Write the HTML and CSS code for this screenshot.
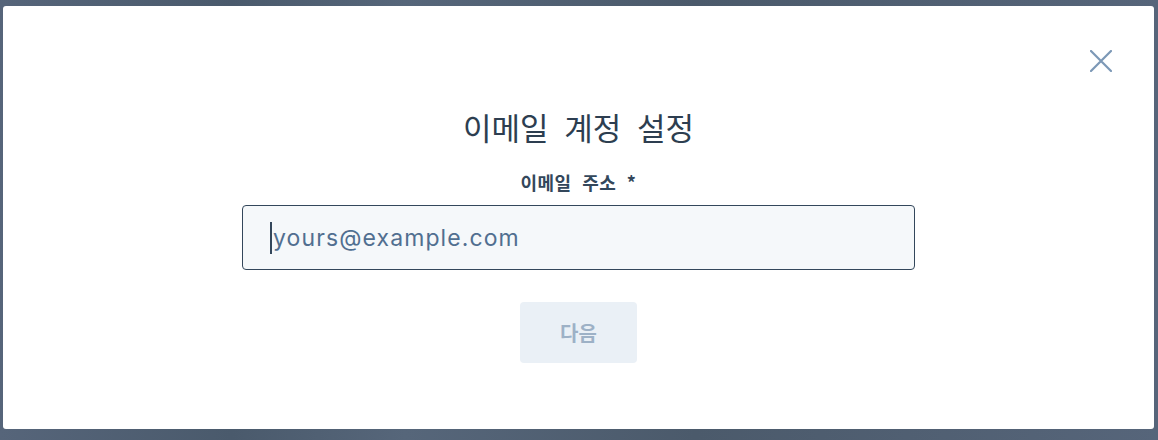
FILE: index.html
```html
<!DOCTYPE html>
<html lang="ko">
<head>
  <meta charset="utf-8">
  <title>이메일 계정 설정</title>
  <link rel="stylesheet" href="styles.css">
</head>
<body>
  <div class="modal">
    <div class="modal-top">
      <button class="close" aria-label="닫기">
        <svg width="22" height="22" viewBox="0 0 22 22"><path d="M1 1 L21 21 M21 1 L1 21" stroke="#7c98b6" stroke-width="2.2" stroke-linecap="round" fill="none"/></svg>
      </button>
    </div>
    <div class="modal-body">
      <h1 class="title">이메일 계정 설정</h1>
      <label class="label" for="email">이메일 주소 *</label>
      <div class="field">
        <span class="caret"></span>
        <input id="email" class="input" type="text" placeholder="yours@example.com">
      </div>
      <button class="next">다음</button>
    </div>
  </div>
</body>
</html>
```

FILE: styles.css
```css
html, body { height: 100%; }
body {
  margin: 0;
  background: linear-gradient(90deg, #56657a 0%, #4a5a6c 20%, #56667a 35%, #4b5a6b 60%, #56657a 100%);
  font-family: "Noto Sans CJK KR", "Noto Sans", sans-serif;
  color: #33475b;
  padding: 6px 4px 11px 3px;
  box-sizing: border-box;
}
.modal {
  background: #fff;
  height: 423px;
  border-radius: 3px;
  display: flex;
  flex-direction: column;
}
.modal-top { display: flex; justify-content: flex-end; padding: 44px 42px 0 0; height: 22px; }
.close { background: none; border: none; padding: 0; width: 22px; height: 22px; cursor: pointer; }
.close svg { display: block; }
.modal-body { display: flex; flex-direction: column; align-items: center; padding-top: 35px; }
.title { margin: 0; font-size: 31px; font-weight: 400; line-height: 40px; word-spacing: 7px; color: #2d3e50; }
.label { margin-top: 23px; font-size: 18px; font-weight: 700; line-height: 24px; letter-spacing: 0.5px; word-spacing: 5px; }
.field { position: relative; margin-top: 11px; }
.input {
  display: block;
  width: 673px; height: 65px; box-sizing: border-box;
  background: #f5f8fa; border: 1px solid #33475b; border-radius: 4px;
  padding: 0 0 0 30px;
  font-family: Inter, sans-serif; font-size: 23px; letter-spacing: 1.1px; color: #33475b;
  outline: none;
}
.input::placeholder { color: #516f90; }
.caret { position: absolute; left: 28px; top: 17px; width: 2px; height: 32px; background: #33475b; }
.next {
  margin-top: 32px; width: 117px; height: 61px;
  background: #eaf0f6; border: none; border-radius: 4px;
  font-family: "Noto Sans CJK KR", sans-serif; font-size: 20px; font-weight: 700; color: #9db1c6;
}
```
